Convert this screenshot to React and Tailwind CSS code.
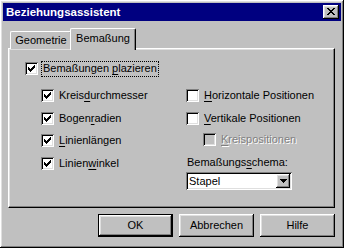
import React from 'react'

const raised = 'shadow-[inset_-1px_-1px_#000,inset_1px_1px_#fff,inset_-2px_-2px_#808080,inset_2px_2px_#dfdfdf]'
const sunken = 'shadow-[inset_1px_1px_#808080,inset_-1px_-1px_#fff,inset_2px_2px_#000,inset_-2px_-2px_#dfdfdf]'

const Check = () => (
  <svg width="7" height="7" viewBox="0 0 7 7" shapeRendering="crispEdges" className="absolute left-[3px] top-[3px]">
    <path d="M6 0h1v1h-1zM5 1h2v1h-2zM0 2h1v1h-1zM4 2h3v1h-3zM0 3h2v1h-2zM3 3h3v1h-3zM0 4h5v1h-5zM1 5h3v1h-3zM2 6h1v1h-1z" fill="#000" />
  </svg>
)

const Box = ({ checked, disabled }) => (
  <div className={`relative w-[13px] h-[13px] shrink-0 ${disabled ? 'bg-[#c0c0c0]' : 'bg-white'} ${sunken}`}>
    {checked && <Check />}
  </div>
)

const Label = ({ pre, u, post, disabled }) => (
  <span className={disabled ? 'text-[#808080] [text-shadow:1px_1px_0_#fff]' : 'text-black'}>
    {pre}<span className="underline underline-offset-[2px]">{u}</span>{post}
  </span>
)

const Row = ({ checked, disabled, className = '', ...rest }) => (
  <div className={`flex items-center h-[13px] gap-[5px] ${className}`}>
    <Box checked={checked} disabled={disabled} />
    <Label disabled={disabled} {...rest} />
  </div>
)

const Button = ({ children, def }) => (
  <div className={`w-[75px] h-[23px] ${def ? 'border border-black' : ''}`}>
    <div className={`w-full h-full flex items-center justify-center bg-[#c0c0c0] ${raised}`}>{children}</div>
  </div>
)

export default function App() {
  return (
    <div className={`w-[344px] h-[248px] bg-[#c0c0c0] p-[3px] flex flex-col text-[11px] leading-[13px] font-['Liberation_Sans',Arial,sans-serif] select-none ${raised}`}>
      {/* title bar */}
      <div className="h-[18px] bg-[#000080] flex items-center justify-between pl-[3px] pr-[2px]">
        <span className="text-white font-bold text-[11.5px]">Beziehungsassistent</span>
        <div className={`w-[16px] h-[14px] bg-[#c0c0c0] flex items-center justify-center ${raised}`}>
          <svg width="8" height="7" viewBox="0 0 8 7" shapeRendering="crispEdges" className="mt-[-1px]">
            <path d="M0 0h2v1h-2zM6 0h2v1h-2zM1 1h2v1h-2zM5 1h2v1h-2zM2 2h4v1h-4zM3 3h2v1h-2zM2 4h4v1h-4zM1 5h2v1h-2zM5 5h2v1h-2zM0 6h2v1h-2zM6 6h2v1h-2z" fill="#000" />
          </svg>
        </div>
      </div>

      <div className="pl-[5px] pr-[6px] pt-[6px]">
        {/* tabs */}
        <div className="flex items-end h-[21px] pl-[2px] relative z-10">
          <div className="w-[62px] h-[18px] bg-[#c0c0c0] border-l border-t border-white rounded-tl-[2px] rounded-tr-[2px] flex items-center justify-center shadow-[inset_-1px_0_#808080] border-r border-r-black mb-[-1px]">
            Geometrie
          </div>
          <div className="w-[66px] h-[22px] -ml-[2px] bg-[#c0c0c0] border-l border-t border-white border-r border-r-black rounded-tl-[2px] rounded-tr-[2px] shadow-[inset_-1px_0_#808080] flex items-start justify-center pt-[3px] mb-[-2px]">
            Bemaßung
          </div>
        </div>

        {/* panel */}
        <div className="h-[160px] bg-[#c0c0c0] border-t border-l border-white border-r border-b border-r-black border-b-black shadow-[inset_-1px_-1px_#808080,inset_1px_1px_#dfdfdf] pt-[13px] pl-[16px]">
          <div className="flex items-center h-[13px]">
            <Box checked />
            <div className="ml-[3px] px-[1px] h-[16px] flex items-center border border-dotted border-black">
              <Label pre="Bemaßungen " u="p" post="lazieren" />
            </div>
          </div>

          <div className="flex mt-[14px] ml-[16px]">
            <div className="w-[145px] flex flex-col">
              <Row checked pre="Kreis" u="d" post="urchmesser" />
              <Row checked pre="Bogen" u="r" post="adien" className="mt-[10px]" />
              <Row checked pre="" u="L" post="inienlängen" className="mt-[9px]" />
              <Row checked pre="Linien" u="w" post="inkel" className="mt-[10px]" />
            </div>
            <div className="flex flex-col">
              <Row pre="" u="H" post="orizontale Positionen" />
              <Row pre="" u="V" post="ertikale Positionen" className="mt-[10px]" />
              <Row disabled pre="" u="K" post="reispositionen" className="mt-[8px] ml-[17px]" />
              <div className="mt-[10px] ml-[1px]">
                <Label pre="Bemaßungs" u="s" post="chema:" />
              </div>
              <div className={`mt-[3px] w-[106px] h-[18px] bg-white flex items-center justify-between pl-[3px] pr-[2px] ${sunken}`}>
                <span>Stapel</span>
                <div className={`w-[14px] h-[14px] bg-[#c0c0c0] flex items-center justify-center ${raised}`}>
                  <svg width="7" height="4" viewBox="0 0 7 4" shapeRendering="crispEdges">
                    <path d="M0 0h7v1h-7zM1 1h5v1h-5zM2 2h3v1h-3zM3 3h1v1h-1z" fill="#000" />
                  </svg>
                </div>
              </div>
            </div>
          </div>
        </div>
      </div>

      {/* buttons */}
      <div className="flex justify-end gap-[6px] mt-[6px] pr-[6px]">
        <Button def>OK</Button>
        <Button>Abbrechen</Button>
        <Button>Hilfe</Button>
      </div>
    </div>
  )
}
